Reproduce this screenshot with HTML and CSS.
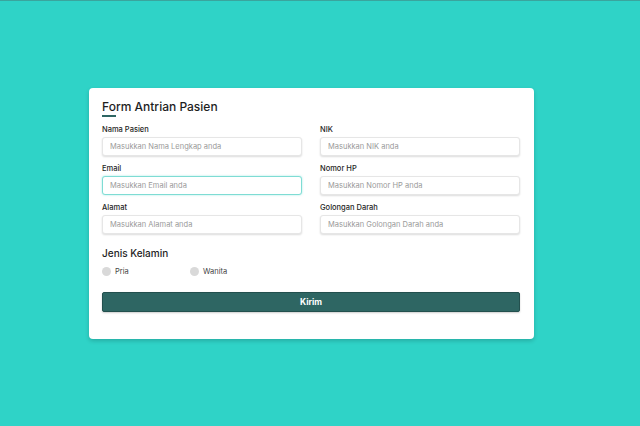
FILE: index.html
```html
<!DOCTYPE html>
<html>
<head>
<meta charset="utf-8">
<link rel="stylesheet" href="styles.css">
</head>
<body>
<div class="topline"></div>
<form class="card">
  <h1 class="title">Form Antrian Pasien</h1>
  <div class="grid">
    <div class="field">
      <label class="label">Nama Pasien</label>
      <input class="input" type="text" placeholder="Masukkan Nama Lengkap anda">
    </div>
    <div class="field">
      <label class="label">NIK</label>
      <input class="input" type="text" placeholder="Masukkan NIK anda">
    </div>
    <div class="field">
      <label class="label">Email</label>
      <input class="input focus" type="text" placeholder="Masukkan Email anda">
    </div>
    <div class="field">
      <label class="label">Nomor HP</label>
      <input class="input" type="text" placeholder="Masukkan Nomor HP anda">
    </div>
    <div class="field">
      <label class="label">Alamat</label>
      <input class="input" type="text" placeholder="Masukkan Alamat anda">
    </div>
    <div class="field">
      <label class="label">Golongan Darah</label>
      <input class="input" type="text" placeholder="Masukkan Golongan Darah anda">
    </div>
  </div>
  <div class="gender-title">Jenis Kelamin</div>
  <div class="radios">
    <label class="radio"><span class="dot"></span>Pria</label>
    <label class="radio"><span class="dot"></span>Wanita</label>
  </div>
  <button class="btn" type="button">Kirim</button>
</form>
</body>
</html>
```
FILE: styles.css
```css
html, body {
  margin: 0;
  padding: 0;
}
body {
  background: #2fd3c7;
  font-family: "Inter", "Open Sans", "DejaVu Sans", sans-serif;
  width: 640px;
  height: 426px;
  overflow: hidden;
}
.topline {
  height: 1px;
  background: #3aa59d;
}
.card {
  box-sizing: border-box;
  width: 445px;
  height: 251px;
  margin: 87px 0 0 89px;
  background: #ffffff;
  border-radius: 4px;
  box-shadow: 0 2px 4px rgba(0, 0, 0, 0.18);
  padding: 11px 14px 0 13px;
}
.title {
  margin: 0;
  font-size: 12px;
  line-height: 16px;
  font-weight: 500;
  color: #1e1e1e;
}
.title::after {
  content: "";
  display: block;
  width: 14px;
  height: 1.5px;
  margin-top: 0;
  background: #2e6663;
}
.grid {
  display: grid;
  grid-template-columns: 200px 200px;
  column-gap: 18px;
  row-gap: 7px;
  margin-top: 7px;
}
.field {
  display: flex;
  flex-direction: column;
  gap: 2px;
}
.label {
  font-size: 7.5px;
  line-height: 11px;
  font-weight: 500;
  color: #1e1e1e;
}
.input {
  box-sizing: border-box;
  height: 19px;
  width: 200px;
  margin: 0;
  border: 1px solid #e6e6e6;
  border-radius: 3px;
  box-shadow: 0 1px 2px rgba(0, 0, 0, 0.14);
  padding: 0 7px;
  font-family: inherit;
  font-size: 7.5px;
  color: #333;
  outline: none;
  background: #fff;
}
.input::placeholder {
  color: #9a9a9a;
}
.input.focus {
  border-color: #7fdcd4;
  box-shadow: 0 0 2px rgba(47, 211, 199, 0.5);
}
.gender-title {
  margin-top: 12px;
  font-size: 10px;
  line-height: 14px;
  font-weight: 500;
  color: #1e1e1e;
}
.radios {
  display: flex;
  margin-top: 7px;
  height: 10px;
}
.radio {
  display: flex;
  align-items: center;
  gap: 4px;
  width: 88px;
  font-size: 7.5px;
  line-height: 10px;
  color: #444;
}
.dot {
  width: 9px;
  height: 9px;
  border-radius: 50%;
  background: #d9d9d9;
}
.btn {
  display: block;
  box-sizing: border-box;
  width: 418px;
  height: 20px;
  margin-top: 15px;
  background: #2e6663;
  border: 1px solid #23504e;
  border-radius: 2px;
  box-shadow: 0 1px 2px rgba(0, 0, 0, 0.2);
  color: #ffffff;
  font-family: inherit;
  font-size: 8.5px;
  font-weight: 700;
  padding: 0;
}
```
